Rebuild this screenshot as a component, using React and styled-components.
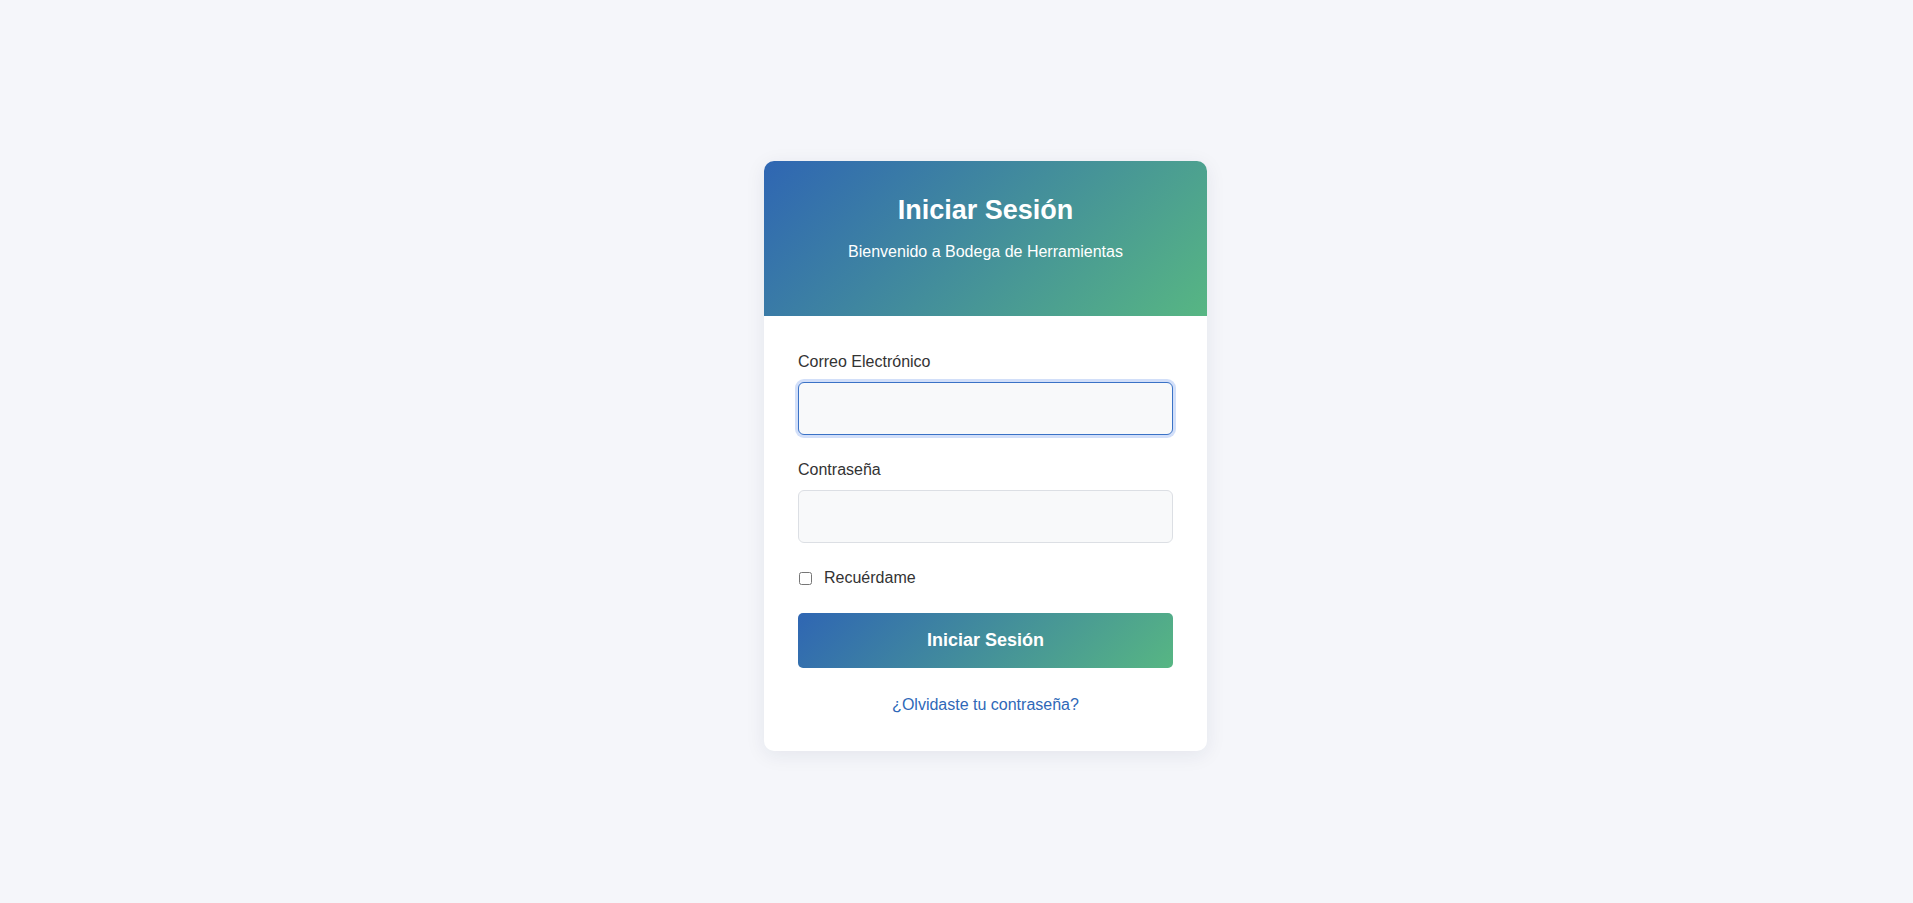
import React from "react";
import styled, { createGlobalStyle } from "styled-components";

const GlobalStyle = createGlobalStyle`
  html, body { margin: 0; padding: 0; }
  body {
    background: #f5f6fa;
    font-family: "Liberation Sans", Arial, sans-serif;
    color: #333;
  }
`;

const Page = styled.div`
  min-height: 903px;
  box-sizing: border-box;
  display: flex;
  align-items: center;
  justify-content: center;
  padding: 9px 0 0 58px;
`;

const Card = styled.div`
  width: 443px;
  background: #ffffff;
  border-radius: 10px;
  overflow: hidden;
  box-shadow: 0 4px 20px rgba(30, 40, 80, 0.08);
`;

const Header = styled.div`
  background: linear-gradient(135deg, #2f66b3 0%, #57b683 100%);
  color: #ffffff;
  text-align: center;
  padding: 33px 32px 0;
  height: 155px;
  box-sizing: border-box;
`;

const Title = styled.h1`
  margin: 0 0 16px;
  font-size: 27px;
  font-weight: 700;
  line-height: 33px;
`;

const Subtitle = styled.p`
  margin: 0;
  font-size: 16px;
  line-height: 18px;
`;

const Body = styled.form`
  padding: 37px 34px 37px;
  display: flex;
  flex-direction: column;
`;

const Field = styled.div`
  display: flex;
  flex-direction: column;
  margin-bottom: 26px;
`;

const Label = styled.label`
  font-size: 16px;
  line-height: 18px;
  color: #333;
  margin-bottom: 11px;
`;

const Input = styled.input`
  height: 53px;
  box-sizing: border-box;
  padding: 0 12px;
  font-family: inherit;
  font-size: 16px;
  color: #333;
  background: #f8f9fa;
  border: 1px solid ${(p) => (p.$active ? "#3a72c6" : "#dcdfe4")};
  border-radius: 6px;
  outline: none;
  box-shadow: ${(p) => (p.$active ? "0 0 0 3px rgba(74, 128, 232, 0.25)" : "none")};
  caret-color: #333;
`;

const CheckRow = styled.label`
  display: flex;
  align-items: center;
  gap: 12px;
  font-size: 16px;
  line-height: 18px;
  color: #333;
  margin: 0 0 26px;
`;

const Check = styled.input`
  width: 13px;
  height: 13px;
  margin: 0 0 0 1px;
`;

const SubmitButton = styled.button`
  height: 55px;
  border: none;
  border-radius: 5px;
  background: linear-gradient(135deg, #2f66b3 0%, #57b683 100%);
  color: #ffffff;
  font-family: inherit;
  font-size: 18px;
  font-weight: 700;
  cursor: pointer;
  margin-bottom: 28px;
`;

const ForgotLink = styled.a`
  text-align: center;
  font-size: 16px;
  line-height: 18px;
  color: #2f68b8;
  text-decoration: none;
`;

export default function App() {
  return (
    <>
      <GlobalStyle />
      <Page>
        <Card>
          <Header>
            <Title>Iniciar Sesión</Title>
            <Subtitle>Bienvenido a Bodega de Herramientas</Subtitle>
          </Header>
          <Body onSubmit={(e) => e.preventDefault()}>
            <Field>
              <Label htmlFor="email">Correo Electrónico</Label>
              <Input id="email" type="email" $active autoFocus />
            </Field>
            <Field>
              <Label htmlFor="password">Contraseña</Label>
              <Input id="password" type="password" />
            </Field>
            <CheckRow>
              <Check type="checkbox" />
              Recuérdame
            </CheckRow>
            <SubmitButton type="submit">Iniciar Sesión</SubmitButton>
            <ForgotLink href="#">¿Olvidaste tu contraseña?</ForgotLink>
          </Body>
        </Card>
      </Page>
    </>
  );
}
